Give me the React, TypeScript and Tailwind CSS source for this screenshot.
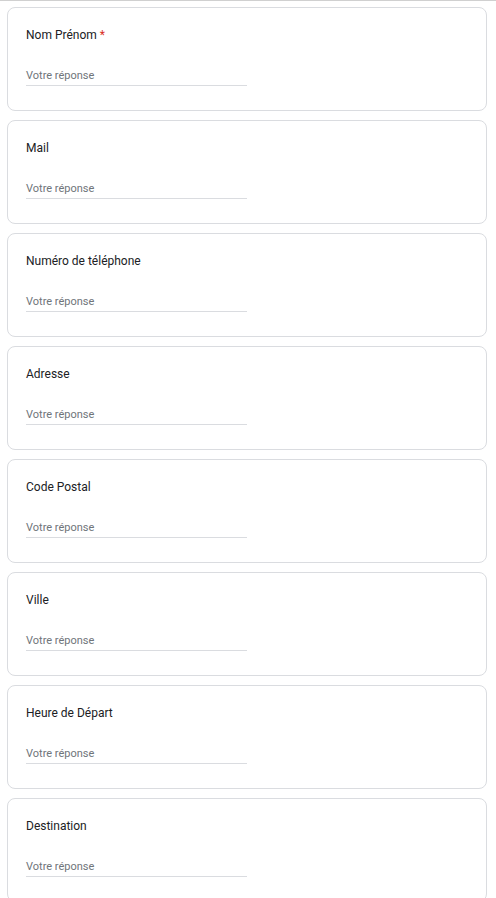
import React from "react";

const fields: { label: string; required?: boolean }[] = [
  { label: "Nom Prénom", required: true },
  { label: "Mail" },
  { label: "Numéro de téléphone" },
  { label: "Adresse" },
  { label: "Code Postal" },
  { label: "Ville" },
  { label: "Heure de Départ" },
  { label: "Destination" },
];

export default function App() {
  return (
    <div
      className="w-[496px] h-[898px] overflow-hidden bg-white border-t border-[#d0d0d0]"
      style={{ fontFamily: "Roboto, Arial, sans-serif" }}
    >
      <div className="flex flex-col gap-[9px] pt-[6px] pl-[7px]">
        {fields.map((f) => (
          <div
            key={f.label}
            className="w-[480px] h-[104px] shrink-0 border border-[#dadce0] rounded-[8px] bg-white px-[18px] pt-[17px]"
          >
            <div className="text-[12px] leading-[20px] text-[#202124]">
              {f.label}
              {f.required && <span className="text-[#d93025]"> *</span>}
            </div>
            <div className="mt-[23px] w-[221px] border-b border-[#dadce0] pb-[1px] text-[11px] leading-[16px] text-[#70757a]">
              Votre réponse
            </div>
          </div>
        ))}
      </div>
    </div>
  );
}
